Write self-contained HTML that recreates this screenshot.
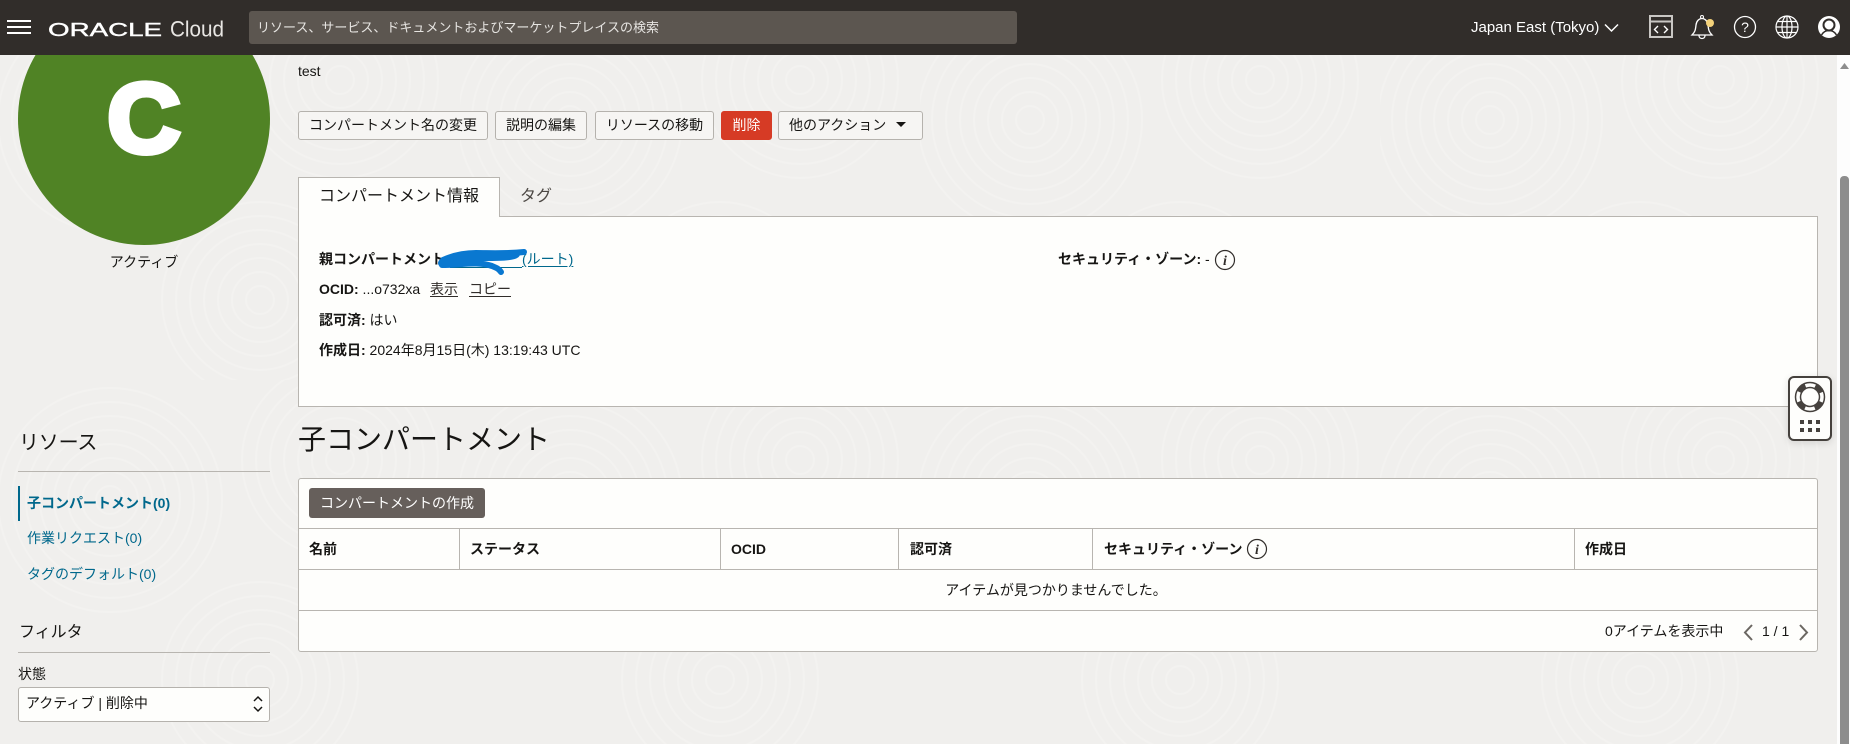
<!DOCTYPE html>
<html lang="ja">
<head>
<meta charset="utf-8">
<title>コンパートメント</title>
<style>
html,body{margin:0;padding:0;width:1850px;height:744px;overflow:hidden;background:#f0efed}
body{font-family:"Liberation Sans","Noto Sans CJK JP",sans-serif;font-size:14px;color:#161513;position:relative}
.t{position:absolute;white-space:nowrap;line-height:20px;height:20px}
.b{font-weight:bold}
.abs{position:absolute}
.btn{position:absolute;top:111px;height:27px;line-height:26px;border:1px solid #b5b2ad;border-radius:3px;background:#f6f5f3;text-align:center;white-space:nowrap;color:#161513}
.line{position:absolute;background:#b8b5b0}
u{text-underline-offset:2px}
svg{position:absolute;overflow:visible}
</style>
</head>
<body>
<svg width="1850" height="744" style="left:0;top:0">
<defs>
<pattern id="sw" width="460" height="380" patternUnits="userSpaceOnUse">
<g fill="none" stroke="#f3f2f0" stroke-width="2">
<circle cx="110" cy="120" r="14"/><circle cx="110" cy="120" r="28"/><circle cx="110" cy="120" r="42"/><circle cx="110" cy="120" r="56"/><circle cx="110" cy="120" r="70"/><circle cx="110" cy="120" r="84"/><circle cx="110" cy="120" r="98"/><circle cx="110" cy="120" r="112"/>
<circle cx="340" cy="80" r="14"/><circle cx="340" cy="80" r="28"/><circle cx="340" cy="80" r="42"/><circle cx="340" cy="80" r="56"/><circle cx="340" cy="80" r="70"/><circle cx="340" cy="80" r="84"/><circle cx="340" cy="80" r="98"/>
<circle cx="260" cy="300" r="14"/><circle cx="260" cy="300" r="28"/><circle cx="260" cy="300" r="42"/><circle cx="260" cy="300" r="56"/><circle cx="260" cy="300" r="70"/><circle cx="260" cy="300" r="84"/><circle cx="260" cy="300" r="98"/>
</g>
</pattern>
</defs>
<rect width="1850" height="744" fill="url(#sw)"/>
</svg>

<!-- avatar -->
<div class="abs" style="left:18px;top:-7px;width:252px;height:252px;border-radius:50%;background:#508325"></div>
<svg width="252" height="200" style="left:18px;top:0">
<text transform="translate(126 152) scale(1.03 1)" text-anchor="middle" font-family="Liberation Sans" font-weight="bold" font-size="98" fill="#fff" stroke="#fff" stroke-width="6" stroke-linejoin="miter">C</text>
</svg>
<div class="t" style="left:18px;width:252px;top:252px;text-align:center">アクティブ</div>

<!-- header -->
<div class="abs" style="left:0;top:0;width:1850px;height:55px;background:#312d2a"></div>
<div class="abs" style="left:7px;top:20px;width:24px;height:2px;background:#fff"></div>
<div class="abs" style="left:7px;top:26px;width:24px;height:2px;background:#fff"></div>
<div class="abs" style="left:7px;top:32px;width:24px;height:2px;background:#fff"></div>
<svg width="200" height="40" style="left:40px;top:10px">
<text x="8" y="26" font-family="Liberation Sans" font-size="18.500" fill="#fff" stroke="#fff" stroke-width=".4" textLength="114" lengthAdjust="spacingAndGlyphs">ORACLE</text>
<text x="130" y="26.500" font-family="Liberation Sans" font-size="22" fill="#e8e6e3" textLength="54" lengthAdjust="spacingAndGlyphs">Cloud</text>
</svg>
<div class="abs" style="left:249px;top:11px;width:768px;height:33px;background:#5c5650;border-radius:3px"></div>
<div class="t" style="left:257px;top:18px;color:#e6e4e1;font-size:13px">リソース、サービス、ドキュメントおよびマーケットプレイスの検索</div>
<div class="t" style="left:1471px;top:18px;color:#fff;font-size:15px">Japan East (Tokyo)</div>
<svg width="250" height="40" style="left:1600px;top:8px" fill="none" stroke="#fff">
<path d="M5 16.500l6.500 6.500 6.500-6.500" stroke-width="1.500"/>
<!-- terminal -->
<rect x="50" y="8" width="22" height="21" stroke="#c9c7c4" stroke-width="2"/>
<path d="M50 13.500h22" stroke="#c9c7c4" stroke-width="2"/>
<path d="M58 18l-3.500 3.500 3.500 3.500M64 18l3.500 3.500-3.500 3.500" stroke-width="1.400"/>
<!-- bell -->
<path d="M92 27c3-3 3.500-5 4-10 .5-4 3-6.500 6-6.500s5.500 2.500 6 6.500c.5 5 1 7 4 10z" stroke-width="1.300"/>
<circle cx="102" cy="9" r="1.500" stroke-width="1"/>
<path d="M99 27.500c0 2 1.500 3 3 3s3-1 3-3" stroke-width="1.300"/>
<circle cx="110" cy="15" r="4" fill="#f4d27a" stroke="none"/>
<!-- help -->
<circle cx="145" cy="19" r="10.500" stroke-width="1.300"/>
<!-- globe -->
<g stroke-width="1.200">
<circle cx="187" cy="19" r="11"/>
<ellipse cx="187" cy="19" rx="5" ry="11"/>
<path d="M187 8v22M176 19h22M177.500 13.500h19M177.500 24.500h19"/>
</g>
<!-- avatar -->
<circle cx="229" cy="19" r="11" fill="#fff" stroke="none"/>
<circle cx="229" cy="17" r="5.500" fill="#fff" stroke="#312d2a" stroke-width="2"/>
<path d="M221.500 27c2-3.500 4.500-4.500 7.500-4.500s5.500 1 7.500 4.500" stroke="#312d2a" stroke-width="1.500"/>
</svg>
<div class="t" style="left:1739px;top:17px;width:12px;text-align:center;color:#fff;font-size:14px">?</div>

<!-- title + actions -->
<div class="t" style="left:298px;top:61px">test</div>
<div class="btn" style="left:298px;width:188px">コンパートメント名の変更</div>
<div class="btn" style="left:495px;width:90px">説明の編集</div>
<div class="btn" style="left:595px;width:117px">リソースの移動</div>
<div class="btn" style="left:721px;width:49px;background:#d63b25;border-color:#d63b25;color:#fff">削除</div>
<div class="btn" style="left:778px;width:143px;text-align:left;text-indent:10px">他のアクション</div>
<svg width="12" height="8" style="left:896px;top:122px"><path d="M0 0h10l-5 5z" fill="#161513"/></svg>

<!-- tab + panel -->
<div class="abs" style="left:298px;top:216px;width:1518px;height:189px;background:#fefefc;border:1px solid #b8b5b0"></div>
<div class="abs" style="left:298px;top:177px;width:202px;height:40px;background:#fefefc;border:1px solid #b8b5b0;border-bottom:0;box-sizing:border-box"></div>
<div class="t" style="left:319px;top:187px;font-size:16px">コンパートメント情報</div>
<div class="t" style="left:520px;top:187px;font-size:16px;color:#4d4945">タグ</div>

<div class="t b" style="left:319px;top:249px">親コンパートメント</div>
<div class="t" style="left:522px;top:249px;color:#00688c"><u>(ルート)</u></div>
<div class="abs" style="left:450px;top:267px;width:72px;height:1px;background:#00688c"></div>
<svg width="110" height="30" style="left:430px;top:247px" fill="none" stroke="#0a78d0" stroke-linecap="round" stroke-linejoin="round">
<path d="M13 13C24 8 34 6 46 6c14 0 28 1 48-1" stroke-width="6"/>
<path d="M12 16c15 1 30-6 44-6 12 0 26 0 30-3" stroke-width="8"/>
<path d="M12 18c18 0 36-4 50 1 5 2 7 3 9 6" stroke-width="6"/>
</svg>
<div class="t" style="left:319px;top:279px"><b>OCID:</b> ...o732xa</div>
<div class="t" style="left:430px;top:279px;color:#312d2a"><u>表示</u></div>
<div class="t" style="left:469px;top:279px;color:#312d2a"><u>コピー</u></div>
<div class="t" style="left:319px;top:310px"><b>認可済:</b> はい</div>
<div class="t" style="left:319px;top:340px"><b>作成日:</b> 2024年8月15日(木) 13:19:43 UTC</div>
<div class="t" style="left:1058px;top:249px"><b>セキュリティ・ゾーン:</b> -</div>
<svg width="22" height="22" style="left:1214px;top:249px"><circle cx="11" cy="11" r="9.500" fill="none" stroke="#312d2a" stroke-width="1.200"/><text x="11" y="16" text-anchor="middle" font-family="Liberation Serif" font-style="italic" font-weight="bold" font-size="14" fill="#312d2a">i</text></svg>

<!-- sidebar -->
<div class="t" style="left:19px;top:433px;font-size:20px;letter-spacing:-.2px">リソース</div>
<div class="line" style="left:18px;top:471px;width:252px;height:1px"></div>
<div class="abs" style="left:18px;top:486px;width:2px;height:35px;background:#00688c"></div>
<div class="t b" style="left:27px;top:493px;color:#00688c">子コンパートメント(0)</div>
<div class="t" style="left:27px;top:528px;color:#00688c">作業リクエスト(0)</div>
<div class="t" style="left:27px;top:564px;color:#00688c">タグのデフォルト(0)</div>
<div class="t" style="left:19px;top:623px;font-size:16px">フィルタ</div>
<div class="line" style="left:18px;top:652px;width:252px;height:1px"></div>
<div class="t" style="left:18px;top:664px">状態</div>
<div class="abs" style="left:18px;top:687px;width:250px;height:33px;background:#fefefc;border:1px solid #b5b2ad;border-radius:3px"></div>
<div class="t" style="left:26px;top:693px">アクティブ | 削除中</div>
<svg width="12" height="18" style="left:252px;top:695px" fill="none" stroke="#161513" stroke-width="1.500"><path d="M2 6l4-4 4 4M2 12l4 4 4-4"/></svg>

<!-- child compartments -->
<div class="t" style="left:298px;top:430px;font-size:28px">子コンパートメント</div>
<div class="abs" style="left:298px;top:478px;width:1518px;height:172px;background:#fefefc;border:1px solid #b8b5b0;border-radius:3px"></div>
<div class="abs" style="left:309px;top:488px;width:176px;height:30px;line-height:30px;background:#665f5b;color:#fff;border-radius:3px;text-align:center">コンパートメントの作成</div>
<div class="line" style="left:299px;top:528px;width:1518px;height:1px"></div>
<div class="line" style="left:299px;top:569px;width:1518px;height:1px"></div>
<div class="line" style="left:299px;top:610px;width:1518px;height:1px"></div>
<div class="line" style="left:459px;top:529px;width:1px;height:40px"></div>
<div class="line" style="left:720px;top:529px;width:1px;height:40px"></div>
<div class="line" style="left:898px;top:529px;width:1px;height:40px"></div>
<div class="line" style="left:1092px;top:529px;width:1px;height:40px"></div>
<div class="line" style="left:1574px;top:529px;width:1px;height:40px"></div>
<div class="t b" style="left:309px;top:539px">名前</div>
<div class="t b" style="left:470px;top:539px">ステータス</div>
<div class="t b" style="left:731px;top:539px">OCID</div>
<div class="t b" style="left:910px;top:539px">認可済</div>
<div class="t b" style="left:1104px;top:539px">セキュリティ・ゾーン</div>
<svg width="22" height="22" style="left:1246px;top:538px"><circle cx="11" cy="11" r="9.500" fill="none" stroke="#312d2a" stroke-width="1.200"/><text x="11" y="16" text-anchor="middle" font-family="Liberation Serif" font-style="italic" font-weight="bold" font-size="14" fill="#312d2a">i</text></svg>
<div class="t b" style="left:1585px;top:539px">作成日</div>
<div class="t" style="left:296px;width:1520px;top:580px;text-align:center">アイテムが見つかりませんでした。</div>
<div class="t" style="left:1605px;top:621px">0アイテムを表示中</div>
<svg width="14" height="20" style="left:1742px;top:623px" fill="none" stroke="#6b6762" stroke-width="2"><path d="M10 2L3 9.500 10 17"/></svg>
<div class="t" style="left:1762px;top:621px">1 / 1</div>
<svg width="14" height="20" style="left:1797px;top:623px" fill="none" stroke="#6b6762" stroke-width="2"><path d="M3 2l7 7.500L3 17"/></svg>

<!-- help widget -->
<div class="abs" style="left:1788px;top:376px;width:40px;height:61px;background:#fefefc;border:2px solid #45413d;border-radius:6px;box-shadow:0 2px 8px rgba(0,0,0,.12)"></div>
<svg width="44" height="65" style="left:1788px;top:376px">
<circle cx="22" cy="21" r="12" fill="none" stroke="#45413d" stroke-width="6.500"/>
<circle cx="22" cy="21" r="12" fill="none" stroke="#fefefc" stroke-width="3.500" stroke-dasharray="10 8.850" stroke-dashoffset="5"/>
<g fill="#45413d"><rect x="12" y="44" width="4" height="4"/><rect x="20" y="44" width="4" height="4"/><rect x="28" y="44" width="4" height="4"/><rect x="12" y="52" width="4" height="4"/><rect x="20" y="52" width="4" height="4"/><rect x="28" y="52" width="4" height="4"/></g>
</svg>

<!-- scrollbar -->
<div class="abs" style="left:1837px;top:55px;width:13px;height:689px;background:#fdfdfd"></div>
<svg width="10" height="8" style="left:1840px;top:62px"><path d="M0 7L4.500 1 9 7z" fill="#8d8d8d"/></svg>
<div class="abs" style="left:1840px;top:176px;width:9px;height:568px;background:#8d8d8d;border-radius:4px 4px 0 0"></div>
</body>
</html>
